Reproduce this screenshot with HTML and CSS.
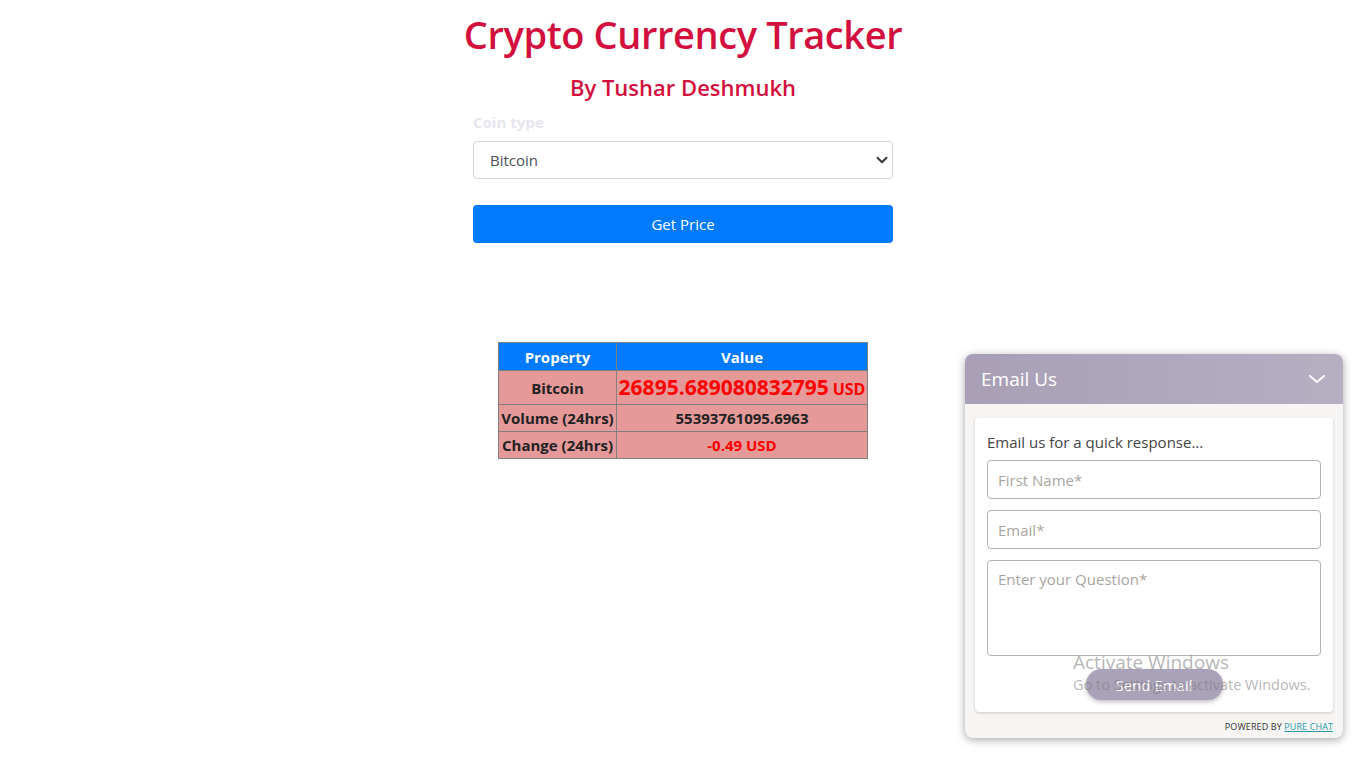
FILE: index.html
```html
<!DOCTYPE html>
<html lang="en">
<head>
<meta charset="utf-8">
<title>Crypto Currency Tracker</title>
<link rel="stylesheet" href="styles.css">
</head>
<body>
<main class="container">
  <h1 class="title">Crypto Currency Tracker</h1>
  <h3 class="subtitle">By Tushar Deshmukh</h3>
  <form class="form">
    <label class="label" for="coin">Coin type</label>
    <div class="select-wrap">
      <select id="coin" class="select">
        <option>Bitcoin</option>
        <option>Ethereum</option>
        <option>Litecoin</option>
      </select>
      <svg class="caret" width="12" height="12" viewBox="0 0 16 16"><path d="M2 5l6 6 6-6" fill="none" stroke="#343a40" stroke-width="2.6" stroke-linecap="round" stroke-linejoin="round"/></svg>
    </div>
    <button type="button" class="btn">Get Price</button>
  </form>
  <table class="table">
    <thead>
      <tr><th class="col1">Property</th><th class="col2">Value</th></tr>
    </thead>
    <tbody>
      <tr class="row-price"><td>Bitcoin</td><td class="red"><span class="price">26895.689080832795</span> <span class="usd">USD</span></td></tr>
      <tr><td>Volume (24hrs)</td><td>55393761095.6963</td></tr>
      <tr><td>Change (24hrs)</td><td class="red">-0.49 USD</td></tr>
    </tbody>
  </table>
</main>

<aside class="chat">
  <div class="chat-head">
    <span class="chat-title">Email Us</span>
    <svg class="chev" width="18" height="12" viewBox="0 0 18 12"><path d="M2 3l7 6 7-6" fill="none" stroke="#fff" stroke-width="2" stroke-linecap="round" stroke-linejoin="round"/></svg>
  </div>
  <div class="chat-body">
    <div class="card">
      <p class="lead">Email us for a quick response...</p>
      <input class="field" type="text" placeholder="First Name*">
      <input class="field" type="text" placeholder="Email*">
      <textarea class="field area" placeholder="Enter your Question*"></textarea>
      <div class="send-row"><button type="button" class="send">Send Email</button></div>
    </div>
    <div class="powered">POWERED BY <a href="#">PURE CHAT</a></div>
  </div>
</aside>

<div class="watermark">
  <div class="wm1">Activate Windows</div>
  <div class="wm2">Go to Settings to activate Windows.</div>
</div>
</body>
</html>
```

FILE: styles.css
```css
* { box-sizing: border-box; }
html, body { margin: 0; padding: 0; }
body {
  font-family: "Open Sans", "Noto Sans", "Liberation Sans", sans-serif;
  background: #fff;
  color: #212529;
  width: 1366px;
  height: 768px;
  overflow: hidden;
  position: relative;
}
.container {
  width: 420px;
  margin: 0 auto;
  padding-top: 9px;
  display: flex;
  flex-direction: column;
  align-items: center;
}
.title {
  margin: 0;
  font-size: 38px;
  font-weight: 600;
  line-height: 50px;
  color: #d3103d;
  letter-spacing: -0.4px;
  white-space: nowrap;
}
.subtitle {
  margin: 13px 0 0;
  font-size: 22px;
  font-weight: 600;
  line-height: 30px;
  color: #d3103d;
}
.form {
  width: 420px;
  margin-top: 10px;
  display: flex;
  flex-direction: column;
}
.label {
  font-size: 15px;
  font-weight: 700;
  color: #e6e6f0;
  line-height: 20px;
  margin-bottom: 9px;
}
.select-wrap { position: relative; }
.select {
  width: 100%;
  height: 38px;
  border: 1px solid #ced4da;
  border-radius: 4px;
  background: #fff;
  font-family: inherit;
  font-size: 15px;
  color: #495057;
  padding: 0 16px;
  appearance: none;
  -webkit-appearance: none;
}
.caret { position: absolute; right: 5px; top: 13px; }
.btn {
  margin-top: 26px;
  height: 38px;
  border: none;
  border-radius: 4px;
  background: #007bff;
  color: #fff;
  font-family: inherit;
  font-size: 15px;
}
.table {
  margin-top: 99px;
  width: 370px;
  border-collapse: collapse;
  background: #e59999;
  font-weight: 700;
  font-size: 15px;
  color: #222;
  text-align: center;
}
.table th, .table td {
  border: 1px solid #808080;
  padding: 0 1px;
  height: 27px;
  line-height: 20px;
  white-space: nowrap;
}
.table th { background: #007bff; color: #fff; height: 28px; }
.col1 { width: 118px; }
.row-price td { height: 34px; }
.red { color: #ff0000; }
.price { font-size: 21px; }
.usd { font-size: 16px; }

/* chat widget */
.chat {
  position: absolute;
  left: 965px;
  top: 354px;
  width: 378px;
  height: 384px;
  border-radius: 8px;
  overflow: hidden;
  box-shadow: 0 2px 8px rgba(0,0,0,0.35);
  background: #f6f5f3;
  font-family: "Open Sans", "Noto Sans", sans-serif;
}
.chat-head {
  height: 50px;
  background: linear-gradient(90deg, #a89fb6, #b6afc2);
  display: flex;
  align-items: center;
  justify-content: space-between;
  padding: 0 17px 0 16px;
}
.chat-title { color: #fff; font-size: 19px; }
.chat-body {
  padding: 14px 10px 0 10px;
  display: flex;
  flex-direction: column;
}
.card {
  background: #fff;
  border-radius: 4px;
  box-shadow: 0 1px 3px rgba(0,0,0,0.18);
  height: 294px;
  padding: 14px 12px 0 12px;
  display: flex;
  flex-direction: column;
}
.lead {
  margin: 0 0 8px;
  font-size: 15px;
  color: #444;
  line-height: 20px;
}
.field {
  width: 100%;
  height: 39px;
  border: 1px solid #b3b3b3;
  border-radius: 4px;
  font-family: inherit;
  font-size: 15px;
  padding: 0 10px;
  margin-bottom: 11px;
  color: #333;
}
.field::placeholder { color: #a9a69f; }
.area {
  height: 96px;
  padding-top: 8px;
  resize: none;
  margin-bottom: 13px;
}
.send-row { display: flex; justify-content: center; }
.send {
  width: 137px;
  height: 31px;
  border: none;
  border-radius: 16px;
  background: #aaa2b8;
  color: #fff;
  font-family: inherit;
  font-size: 15px;
  box-shadow: 0 2px 4px rgba(0,0,0,0.25);
}
.powered {
  text-align: right;
  font-size: 9px;
  color: #333;
  margin-top: 8px;
  letter-spacing: 0.1px;
}
.powered a { color: #2a9aa6; }

.watermark {
  position: absolute;
  left: 1073px;
  top: 650px;
  color: rgba(120,120,120,0.55);
  pointer-events: none;
}
.wm1 { font-size: 19px; line-height: 24px; }
.wm2 { font-size: 14.5px; line-height: 22px; }
```
